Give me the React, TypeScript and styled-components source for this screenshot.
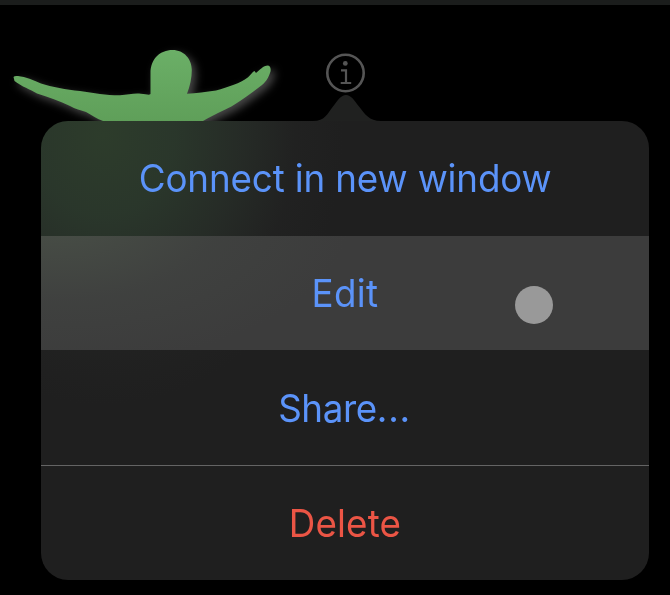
import React from "react";
import styled, { createGlobalStyle, css } from "styled-components";

const GlobalStyle = createGlobalStyle`
  html, body { margin: 0; background: #000; }
  * { box-sizing: border-box; }
`;

const Screen = styled.main`
  width: 670px;
  height: 595px;
  overflow: hidden;
  background: #000;
  font-family: Inter, "Liberation Sans", sans-serif;
  display: flex;
  flex-direction: column;
`;

const TopEdge = styled.div`
  height: 5px;
  flex: none;
  background: #1b1d1c;
`;

const Stage = styled.header`
  height: 116px;
  flex: none;
  svg { display: block; overflow: visible; }
`;

const Popover = styled.nav`
  width: 608px;
  height: 459px;
  margin-left: 41px;
  border-radius: 27px;
  overflow: hidden;
  display: grid;
  grid-template-rows: 115px 114px 115px 115px;
  position: relative;
  background:
    radial-gradient(ellipse 240px 270px at 62px 14px, rgba(45, 60, 43, 1) 0%, rgba(43, 57, 44, 0.9) 30%, rgba(41, 49, 42, 0.66) 58%, rgba(36, 37, 36, 0.4) 80%, rgba(31, 31, 31, 0) 100%),
    #1f1f1f;
`;

const Item = styled.button<{
  $tone?: "danger";
  $active?: boolean;
  $divided?: boolean;
  $lowered?: boolean;
}>`
  position: relative;
  border: 0;
  margin: 0;
  padding: ${(p) => (p.$lowered ? "1px 1px 0 0" : "0 0 1px 0")};
  display: flex;
  align-items: center;
  justify-content: center;
  background: none;
  font-family: inherit;
  font-size: 38.5px;
  font-weight: 400;
  line-height: 48px;
  white-space: pre;
  color: ${(p) => (p.$tone === "danger" ? "#eb5545" : "#5b93f9")};
  ${(p) =>
    p.$active &&
    css`
      background:
        radial-gradient(ellipse 290px 150px at 20px -20px, rgba(73, 80, 71, 0.95), rgba(66, 69, 66, 0.55) 55%, rgba(61, 61, 61, 0)),
        #3c3c3c;
    `}
  ${(p) =>
    p.$divided &&
    css`
      box-shadow: inset 0 1px #646464;
    `}
`;

const Label = styled.span<{ $spacing: number }>`
  display: block;
  transform: scaleX(0.955);
  letter-spacing: ${(p) => p.$spacing}px;
`;

const Ellipsis = styled.span`
  letter-spacing: 0.8px;
`;

const TouchPoint = styled.span`
  position: absolute;
  left: 474px;
  top: 50px;
  width: 38px;
  height: 38px;
  border-radius: 50%;
  background: #999;
`;

function Backdrop() {
  return (
    <svg width="670" height="116" viewBox="0 5 670 116" aria-hidden="true">
      <defs>
        <linearGradient id="body" x1="0" y1="50" x2="0" y2="122" gradientUnits="userSpaceOnUse">
          <stop stopColor="#6baf67" />
          <stop offset="1" stopColor="#5f9f59" />
        </linearGradient>
        <filter id="glow" x="-10%" y="-30%" width="120%" height="160%" colorInterpolationFilters="sRGB">
          <feDropShadow dx="4" dy="4" stdDeviation="4.5" floodColor="#fff" floodOpacity="0.28" />
        </filter>
        <clipPath id="stage">
          <path d="M0 5H670V121H0Z" />
        </clipPath>
      </defs>
      <g clipPath="url(#stage)">
        <path
          filter="url(#glow)"
          fill="url(#body)"
          d="M13.500 77 Q14.500 75.500 18 76 C26 77 33 80 41 83.500 C52 87 66 89.500 80 91 C94 93 108 95.500 120 95.300 C128 94.500 134 93 141 93.700 C146 94 149 95.500 150.500 94 L150.500 73 C150.500 59 160 50 172.500 50 C184 50 191.800 59 191.800 70 C191.800 78 190 86 187 93.800 C196 93.500 206 91.500 216 90.500 C228 87 241 83 247 78 C250 76 252 72 254.500 71 L256 73 C260 70 263 65.500 268 65.500 C270.500 66 271 69 270.500 71.500 C269 76 267 81 262 85 C255 90 248 96 240 101 C229 109 216 113 203 121 C198 126 110 126 103 121 C97 119 92 115 86 112 C81 110 75 109 70 106 C60 101 48 97 37 93.500 C30 89 22 87 14.500 81 Z"
        />
      </g>
      <path fill="#202120" d="M313 121 C325 121 327 114 333 106.500 C338 100 341 95 346 95 C351 95 354 100 359 106.500 C365 114 369 121 381 121 Z" />
      <g fill="none" stroke="#555">
        <circle cx="345.500" cy="73" r="18.200" strokeWidth="2.600" />
        <path strokeWidth="2.2" d="M341 70.400H346V83M340.700 83H351.200" />
      </g>
      <circle cx="345.300" cy="63.400" r="2.400" fill="#555" />
    </svg>
  );
}

export default function App() {
  return (
    <>
      <GlobalStyle />
      <Screen>
        <TopEdge />
        <Stage>
          <Backdrop />
        </Stage>
        <Popover>
          <Item>
            <Label $spacing={-0.15}>Connect in new window</Label>
          </Item>
          <Item $active>
            <Label $spacing={0.3}>Edit</Label>
            <TouchPoint />
          </Item>
          <Item $lowered>
            <Label $spacing={-0.4}>
              Share<Ellipsis>...</Ellipsis>
            </Label>
          </Item>
          <Item $tone="danger" $divided $lowered>
            <Label $spacing={0.2}>Delete</Label>
          </Item>
        </Popover>
      </Screen>
    </>
  );
}
